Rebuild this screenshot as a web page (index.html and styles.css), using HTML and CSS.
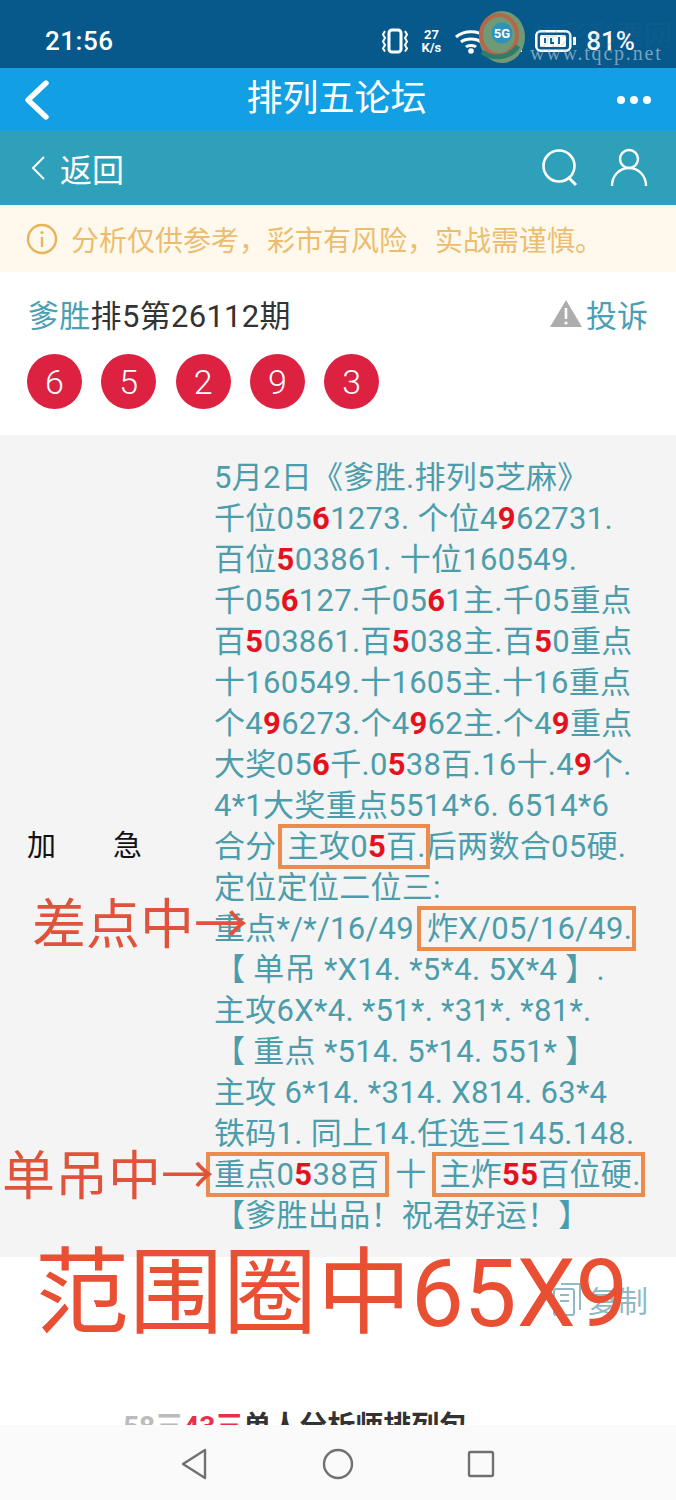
FILE: index.html
```html
<!DOCTYPE html>
<html lang="zh">
<head>
<meta charset="utf-8">
<title>排列五论坛</title>
<link rel="stylesheet" href="styles.css">
</head>
<body>
<div class="phone">
  <div class="status">
    <span class="time">21:56</span>
    <div class="status-icons">
      <svg width="28" height="28" viewBox="0 0 28 28"><rect x="8" y="3" width="12" height="22" rx="3" fill="none" stroke="#fff" stroke-width="3"/><path d="M4 4l-2 3.500 2 3.500-2 3.500 2 3.500-2 3.500 2 3M24 4l2 3.500-2 3.500 2 3.500-2 3.500 2 3.500-2 3" fill="none" stroke="#fff" stroke-width="2"/></svg>
      <span class="speed"><b>27</b><b>K/s</b></span>
      <svg class="ic-wifi" width="34" height="26" viewBox="0 0 34 26"><path d="M2 9c8-7 22-7 30 0M7 14c5-4 15-4 20 0M12 19c2-2 8-2 10 0" fill="none" stroke="#fff" stroke-width="3"/><circle cx="17" cy="23" r="2.800" fill="#fff"/></svg>
      <svg width="32" height="26" viewBox="0 0 32 26"><path d="M5 24v-5M12 24v-8M19 24v-12M26 24v-22" stroke="#fff" stroke-width="4"/></svg>
      <svg width="42" height="24" viewBox="0 0 42 24"><rect x="1.300" y="2.300" width="34" height="19.400" rx="4.500" fill="none" stroke="#fff" stroke-width="2.600"/><rect x="5" y="6" width="26" height="12" rx="1.500" fill="#fff"/><path d="M10 9v5M16 9v5h3M24 8v7" stroke="#06598a" stroke-width="1.800" fill="none"/><rect x="38" y="8" width="3" height="8" fill="#fff"/></svg>
      <span class="batt">81%</span>
    </div>
  </div>
  <div class="appbar">
    <svg class="appbar-back" width="28" height="42" viewBox="0 0 28 42"><path d="M24 4L6 21l18 17" fill="none" stroke="#fff" stroke-width="5.400" stroke-linecap="round" stroke-linejoin="round"/></svg>
    <h1 class="appbar-title">排列五论坛</h1>
    <div class="dots"><i></i><i></i><i></i></div>
  </div>
  <div class="subbar">
    <svg width="16" height="26" viewBox="0 0 16 26"><path d="M14 2L3 13l11 11" fill="none" stroke="#fff" stroke-width="2"/></svg>
    <span class="subbar-text">返回</span>
    <svg width="40" height="40" viewBox="0 0 40 40"><circle cx="18" cy="18" r="15.500" fill="none" stroke="#fff" stroke-width="2.600"/><path d="M27 29l8 8" stroke="#fff" stroke-width="3"/></svg>
    <svg class="ic-user" width="38" height="40" viewBox="0 0 38 40"><circle cx="19" cy="11" r="9" fill="none" stroke="#fff" stroke-width="2.400"/><path d="M2 38c0-10 7-18 17-18s17 8 17 18" fill="none" stroke="#fff" stroke-width="2.400"/></svg>
  </div>
  <div class="notice">
    <svg width="32" height="32" viewBox="0 0 32 32"><circle cx="16" cy="16" r="14" fill="none" stroke="#e8b35c" stroke-width="2.400"/><path d="M16 14v10" stroke="#e8b35c" stroke-width="2.400"/><circle cx="16" cy="9.500" r="1.600" fill="#e8b35c"/></svg>
    <span>分析仅供参考，彩市有风险，实战需谨慎。</span>
  </div>
  <div class="post-head">
    <div class="post-title"><span class="author">爹胜</span>排5第26112期</div>
    <div class="report">
      <svg width="34" height="28" viewBox="0 0 34 28"><path d="M17 1L33 28H1z" fill="#adadad"/><path d="M17 9v11" stroke="#fff" stroke-width="2.600"/><circle cx="17" cy="24" r="1.600" fill="#fff"/></svg>
      <span>投诉</span>
    </div>
  </div>
  <div class="balls">
    <span class="ball">6</span><span class="ball">5</span><span class="ball">2</span><span class="ball">9</span><span class="ball">3</span>
  </div>
  <div class="content">
    <div class="tag">加<span class="tag-gap"></span>急</div>
    <div class="body-text">
      <p>5月2日《爹胜.排列5芝麻》</p>
      <p>千位05<b>6</b>1273. 个位4<b>9</b>62731.</p>
      <p>百位<b>5</b>03861. 十位160549.</p>
      <p>千05<b>6</b>127.千05<b>6</b>1主.千05重点</p>
      <p>百<b>5</b>03861.百<b>5</b>038主.百<b>5</b>0重点</p>
      <p>十160549.十1605主.十16重点</p>
      <p>个4<b>9</b>6273.个4<b>9</b>62主.个4<b>9</b>重点</p>
      <p>大奖05<b>6</b>千.0<b>5</b>38百.16十.4<b>9</b>个.</p>
      <p>4*1大奖重点5514*6. 6514*6</p>
      <p>合分<span class="box box-a">主攻0<b>5</b>百.</span>后两数合05硬.</p>
      <p>定位定位二位三:</p>
      <p>重点*/*/16/49 <span class="box box-b">炸X/05/16/49.</span></p>
      <p>【 单吊 *X14. *5*4. 5X*4 】.</p>
      <p>主攻6X*4. *51*. *31*. *81*.</p>
      <p>【 重点 *514. 5*14. 551* 】</p>
      <p>主攻 6*14. *314. X814. 63*4</p>
      <p>铁码1. 同上14.任选三145.148.</p>
      <p><span class="box box-c">重点0<b>5</b>38百</span> 十 <span class="box box-d">主炸<b>55</b>百位硬.</span></p>
      <p>【爹胜出品！祝君好运！】</p>
    </div>
  </div>
  <div class="copy-row">
    <svg width="30" height="36" viewBox="0 0 30 36"><rect x="2" y="8" width="20" height="26" rx="2" fill="none" stroke="#8fb9c6" stroke-width="2"/><path d="M9 3h19v26M8 14h9M8 20h9" fill="none" stroke="#8fb9c6" stroke-width="2"/></svg>
    <span>复制</span>
  </div>
  <div class="next-title"><span class="n-gray">58三</span><span class="n-red">43三</span>单人分析师排列包</div>

  <div class="watermark">
    <svg class="wm-logo" width="48" height="54" viewBox="0 0 48 54"><ellipse cx="24" cy="27" rx="23" ry="26" fill="#6f9a78"/><ellipse cx="21" cy="25" rx="18" ry="20" fill="none" stroke="#b8664a" stroke-width="4"/><path d="M4 42c12 8 28 6 36-6" fill="none" stroke="#2e7d6a" stroke-width="5"/><circle cx="24" cy="23" r="10.500" fill="#2f93b8"/><text x="24" y="28" class="wm-5g">5G</text></svg>
    <span class="wm-cn">悦彩彩票网</span>
    <span class="wm-url">www.tqcp.net</span>
  </div>
  <span class="note note-a">差点中→</span>
  <span class="note note-b">单吊中→</span>
  <span class="note note-c">范围圈中65X9</span>

  <nav class="navbar">
    <svg width="30" height="34" viewBox="0 0 30 34"><path d="M25 3v28L3 17z" fill="none" stroke="#707070" stroke-width="2.400" stroke-linejoin="round"/></svg>
    <svg width="32" height="32" viewBox="0 0 32 32"><circle cx="16" cy="16" r="14" fill="none" stroke="#707070" stroke-width="2.400"/></svg>
    <svg width="30" height="30" viewBox="0 0 30 30"><rect x="3" y="3" width="24" height="24" rx="1.500" fill="none" stroke="#707070" stroke-width="2.400"/></svg>
  </nav>
</div>
</body>
</html>
```
FILE: styles.css
```css
* { box-sizing: border-box; }
html, body { margin: 0; padding: 0; background: #fff; }
.phone {
  position: relative;
  width: 676px;
  height: 1500px;
  overflow: hidden;
  font-family: Roboto, "Noto Sans CJK SC", sans-serif;
}
.status {
  height: 68px;
  background: #06598a;
  display: flex;
  align-items: center;
  justify-content: space-between;
  padding: 14px 41px 0 45px;
  color: #fff;
}
.time { font-size: 26px; font-weight: 500; letter-spacing: .5px; }
.status-icons { display: flex; align-items: center; gap: 9px; }
.speed { display: flex; flex-direction: column; font-size: 13px; line-height: 13px; text-align: center; margin-left: 4px; }
.speed b { font-weight: 700; }
.ic-wifi { margin-left: 4px; margin-right: -3px; }
.batt { font-size: 26px; font-weight: 500; }
.appbar {
  height: 63px;
  background: #129fe3;
  display: grid;
  grid-template-columns: 1fr auto 1fr;
  align-items: center;
  padding: 0 25px 0 22px;
}
.appbar-title { margin: 0; font-size: 36px; line-height: 63px; font-weight: 400; color: #fff; }
.dots { justify-self: end; display: flex; gap: 5px; }
.dots i { width: 8px; height: 8px; border-radius: 50%; background: #fff; display: block; }
.subbar {
  height: 74px;
  background: #2fa0b9;
  display: flex;
  align-items: center;
  padding: 0 28px 0 30px;
  color: #fff;
}
.subbar-text { font-size: 32px; margin-left: 14px; flex: 1; }
.ic-user { margin-left: 29px; }
.notice {
  height: 67px;
  background: #fef9ec;
  display: flex;
  align-items: center;
  gap: 13px;
  padding: 0 0 0 26px;
  font-size: 28px;
  color: #ecbd6f;
}
.post-head {
  display: flex;
  justify-content: space-between;
  align-items: center;
  height: 82px;
  padding: 0 28px;
}
.post-title { font-size: 31px; letter-spacing: .3px; color: #333; }
.author { color: #4b9fb3; }
.report { display: flex; align-items: center; gap: 3px; font-size: 31px; color: #4b9fb3; }
.balls { display: flex; gap: 19.300px; padding: 0 27px; height: 81px; }
.ball {
  width: 55px;
  height: 55px;
  border-radius: 50%;
  background: #dc2141;
  color: #fff;
  font-size: 34px;
  font-weight: 300;
  display: flex;
  align-items: center;
  justify-content: center;
}
.content {
  height: 822px;
  background: #f4f4f4;
  display: flex;
  align-items: center;
}
.tag {
  width: 214px;
  padding-left: 27px;
  padding-bottom: 6px;
  font-size: 29px;
  color: #111;
  display: flex;
}
.tag-gap { width: 57px; }
.body-text { font-size: 31px; letter-spacing: .3px; line-height: 41px; color: #4c9dab; white-space: nowrap; }
.body-text p { margin: 0; }
.body-text b { color: #e3121e; font-weight: 700; }
.box { outline: 4px solid #ec8c4c; }
.box-a { margin-left: 5px; padding: 0 0 0 6px; }
.box-b { padding: 0 0 0 6px; margin-left: -1px; }
.box-c { margin-left: -4px; margin-right: 2px; padding: 0 6px 0 4px; }
.box-d { margin-left: 2px; padding: 0 0 0 3px; }
.copy-row {
  display: flex;
  justify-content: flex-end;
  align-items: center;
  gap: 6px;
  height: 84px;
  padding-right: 28px;
  font-size: 30px;
  color: #8fb9c6;
}
.next-title { margin-top: 66px; padding-left: 123px; font-size: 28px; line-height: 40px; font-weight: 700; color: #333; white-space: nowrap; }
.n-gray { color: #bbb; }
.n-red { color: #e8304a; }
.watermark { position: absolute; left: 470px; top: 8px; width: 206px; height: 64px; }
.wm-logo { position: absolute; left: 8px; top: 2px; }
.wm-5g { font-size: 13px; font-weight: 700; fill: #fff; text-anchor: middle; }
.wm-cn { position: absolute; left: 62px; top: 6px; font-size: 28px; color: rgba(60, 110, 150, .16); white-space: nowrap; }
.wm-url { position: absolute; left: 60px; top: 34px; font-family: "Liberation Serif", serif; font-size: 20px; letter-spacing: 1.800px; color: rgba(200, 215, 225, .6); white-space: nowrap; }
.note { position: absolute; color: #e0533b; white-space: nowrap; }
.note-a { left: 32px; top: 891px; font-size: 54px; line-height: 70px; }
.note-b { left: 2px; top: 1142px; font-size: 53px; line-height: 70px; }
.note-c { left: 35px; top: 1239px; font-size: 94px; line-height: 110px; color: #e84f33; }
.navbar {
  position: absolute;
  left: 0;
  right: 0;
  bottom: 0;
  height: 75px;
  padding-top: 3px;
  background: #fafafa;
  display: flex;
  align-items: center;
  justify-content: center;
  gap: 112px;
}
```
